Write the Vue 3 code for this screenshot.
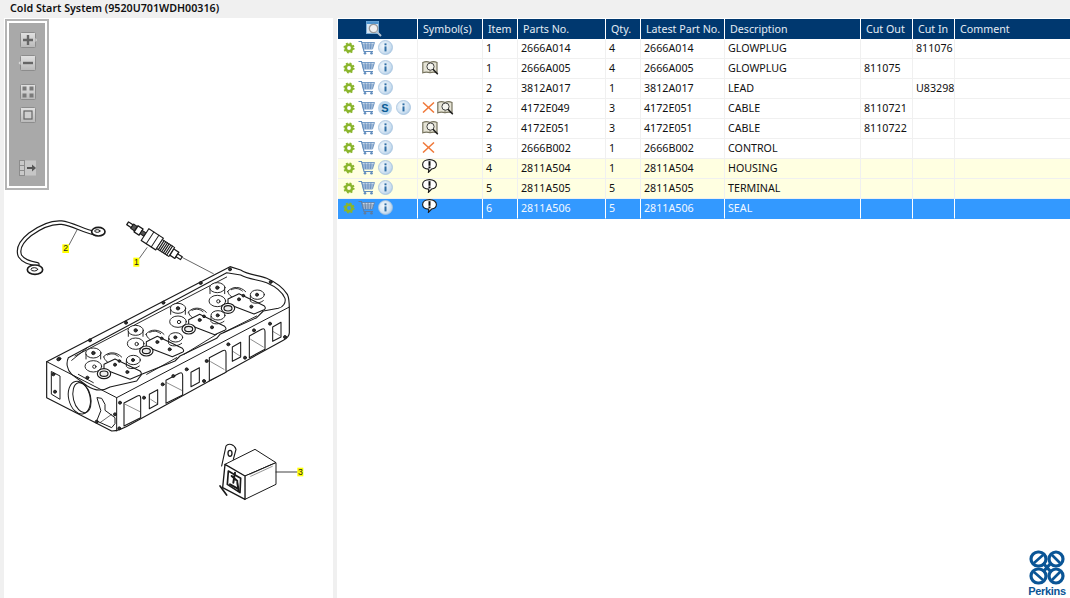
<template>
  <div class="page">
    <svg class="defs" width="0" height="0" aria-hidden="true">
      <defs>
        <radialGradient id="infoFill" cx="0.4" cy="0.4" r="0.7">
          <stop offset="0" stop-color="#f4f9fd" />
          <stop offset="0.65" stop-color="#cfe1f1" />
          <stop offset="1" stop-color="#a2c3e2" />
        </radialGradient>
        <linearGradient id="btnFill" x1="0" y1="0" x2="0" y2="1">
          <stop offset="0" stop-color="#e2e2e2" />
          <stop offset="1" stop-color="#b9b9b9" />
        </linearGradient>
        <symbol id="gear" viewBox="0 0 12 12">
          <circle cx="6" cy="6" r="3.2" fill="none" stroke="#8ab52c" stroke-width="2.6" />
          <circle cx="6" cy="6" r="4.7" fill="none" stroke="#8ab52c" stroke-width="1.8" stroke-dasharray="1.85 1.85" />
        </symbol>
        <symbol id="cart" viewBox="0 0 17 15">
          <path d="M0.5 1.5H3.5L6 11.5H15" fill="none" stroke="currentColor" stroke-width="1.1" />
          <path d="M4 2.5H16.5L14.5 9H5.5Z" fill="#c6d6e8" stroke="currentColor" stroke-width="0.8" />
          <path d="M7 2.5L7.6 9M10 2.5V9M13 2.5L12.4 9M4.6 5H16M5.2 7H15" stroke="currentColor" stroke-width="0.8" fill="none" />
          <circle cx="7" cy="13.3" r="1.3" fill="currentColor" />
          <circle cx="13.5" cy="13.3" r="1.3" fill="currentColor" />
        </symbol>
        <symbol id="info" viewBox="0 0 15 15">
          <circle cx="7.5" cy="7.5" r="7" fill="url(#infoFill)" stroke="#a5c2dd" stroke-width="0.8" />
          <rect x="6.5" y="6.4" width="2" height="5" fill="#2f6ea5" />
          <rect x="6.5" y="3.4" width="2" height="1.9" fill="#2f6ea5" />
        </symbol>
        <symbol id="cross" viewBox="0 0 13 11">
          <path d="M1 0.5L12 10.5M12 0.5L1 10.5" stroke="#f0793a" stroke-width="1.5" fill="none" />
        </symbol>
        <symbol id="book" viewBox="0 0 17 14">
          <path d="M0.8 1.5Q4.5 -0.2 8 1.5Q11.5 -0.2 15 1.5V11.8Q11.5 10.4 8 11.8Q4.5 10.4 0.8 11.8Z" fill="#e6e4d6" stroke="#77745f" stroke-width="1.2" />
          <path d="M8 1.5V11.8" stroke="#77745f" stroke-width="0.9" />
          <circle cx="8.5" cy="5.6" r="3.6" fill="#f6f6f0" stroke="#444" stroke-width="1" />
          <path d="M11 8.2L15.8 13.2" stroke="#1c1c1c" stroke-width="1.5" />
        </symbol>
        <symbol id="bubble" viewBox="0 0 15 14">
          <path d="M7.5 0.6C11.5 0.6 14.4 2.7 14.4 5.5C14.4 8 12.4 9.6 9.6 10L6.4 13.4L6.8 10.1C3.2 9.9 0.6 8.1 0.6 5.5C0.6 2.7 3.5 0.6 7.5 0.6Z" fill="#fff" stroke="#1a1a1a" stroke-width="1.1" />
          <rect x="6.5" y="2.2" width="2" height="4.6" fill="#111" />
          <rect x="6.5" y="7.4" width="2" height="1.8" fill="#111" />
        </symbol>
      </defs>
    </svg>

    <div class="title">Cold Start System (9520U701WDH00316)</div>

    <div class="main">
      <div class="drawing-pane">
        <div class="toolbar">
          <div class="toolbar-inner">
            <svg class="tool tool-plus" width="17" height="16" viewBox="0 0 17 16">
              <rect x="0.5" y="0.5" width="15" height="15" rx="1" fill="url(#btnFill)" stroke="#8c8c8c" />
              <path d="M15.5 6L17 8L15.5 10Z" fill="#ddd" />
              <path d="M3 8H13M8 3V13" stroke="#666" stroke-width="2.4" />
            </svg>
            <svg class="tool tool-minus" width="18" height="16" viewBox="0 0 18 16">
              <rect x="2.5" y="0.5" width="15" height="15" rx="1" fill="url(#btnFill)" stroke="#8c8c8c" />
              <path d="M2.5 6L0.5 8L2.5 10Z" fill="#ddd" />
              <path d="M5 8H15" stroke="#666" stroke-width="2.4" />
            </svg>
            <svg class="tool tool-grid" width="16" height="16" viewBox="0 0 16 16">
              <rect x="0.5" y="0.5" width="15" height="15" rx="1" fill="url(#btnFill)" stroke="#8c8c8c" />
              <rect x="2.5" y="2.5" width="4" height="4" fill="#7a7a7a" />
              <rect x="9.5" y="2.5" width="4" height="4" fill="#7a7a7a" />
              <rect x="2.5" y="9.5" width="4" height="4" fill="#7a7a7a" />
              <rect x="9.5" y="9.5" width="4" height="4" fill="#7a7a7a" />
            </svg>
            <svg class="tool tool-fit" width="16" height="16" viewBox="0 0 16 16">
              <rect x="0.5" y="0.5" width="15" height="15" rx="1" fill="url(#btnFill)" stroke="#8c8c8c" />
              <rect x="4" y="4" width="8" height="8" fill="#cfcfcf" stroke="#666" stroke-width="1.2" />
            </svg>
            <svg class="tool tool-panel" width="18" height="16" viewBox="0 0 18 16">
              <rect x="0.5" y="0.5" width="5" height="5" fill="#c9c9c9" stroke="#8c8c8c" />
              <rect x="0.5" y="5.5" width="5" height="5" fill="#c9c9c9" stroke="#8c8c8c" />
              <rect x="0.5" y="10.5" width="5" height="5" fill="#c9c9c9" stroke="#8c8c8c" />
              <rect x="6" y="0.5" width="11" height="15" fill="#d6d6d6" opacity="0.65" />
              <path d="M8 8H15" stroke="#555" stroke-width="2" />
              <path d="M13 4.5L17 8L13 11.5Z" fill="#555" />
            </svg>
          </div>
        </div>

        <svg class="exploded" viewBox="0 0 960 930" width="320" height="310">
          <g fill="none" stroke="#1a1a1a" stroke-width="2.8" stroke-linejoin="round" stroke-linecap="round">
            <!-- harness -->
            <path d="M112 190C85 185 70 180 60 165C50 140 65 120 90 100C120 78 150 62 185 65C215 68 250 90 285 97" stroke-width="14" />
            <path d="M112 190C85 185 70 180 60 165C50 140 65 120 90 100C120 78 150 62 185 65C215 68 250 90 285 97" stroke="#fff" stroke-width="7" />
            <ellipse cx="105" cy="206" rx="23" ry="14" stroke-width="5" fill="#fff" />
            <ellipse cx="103" cy="205" rx="10" ry="5" stroke-width="3" />
            <ellipse cx="295" cy="92" rx="20" ry="13" stroke-width="5" fill="#fff" />
            <ellipse cx="292" cy="90" rx="8" ry="4" stroke-width="3" />

            <!-- glow plug -->
            <g transform="translate(383 67) rotate(33)" fill="#fff">
              <rect x="0" y="-5" width="16" height="10" stroke-width="4" />
              <rect x="16" y="-8" width="14" height="16" fill="#555" />
              <rect x="30" y="-11" width="18" height="22" stroke-width="4" />
              <rect x="48" y="-6" width="14" height="12" fill="#555" />
              <rect x="62" y="-21" width="52" height="42" stroke-width="3.5" />
              <path d="M80 -21V21M98 -21V21" />
              <rect x="114" y="-16" width="44" height="32" />
              <path d="M120 -16V16M126 -16V16M132 -16V16M138 -16V16M144 -16V16M150 -16V16" stroke-width="3.5" />
              <rect x="158" y="-11" width="18" height="22" stroke-width="4" />
              <rect x="176" y="-5" width="16" height="10" stroke-width="3.5" />
            </g>
            <path d="M548 170L640 218" stroke-width="2" />
            <path d="M441 140L418 172" stroke-width="2" />
            <path d="M232 85L207 132" stroke-width="2" />

            <!-- cylinder head -->
            <path d="M140 482L690 197L722 207C745 222 775 222 800 232C830 245 850 262 862 280C868 292 868 305 868 325V395C868 405 860 412 850 418L395 668C375 680 355 690 335 690L140 590Z" fill="#fff" stroke-width="3.5" />
            <path d="M140 482L350 590V690M350 590L868 318" stroke-width="3" />
            <path d="M205 470L680 215L722 222C745 235 770 235 800 245C830 258 848 275 855 292C858 305 850 318 835 322L790 330L770 350L660 400L650 412L540 465L525 480L425 520L410 540L330 558C310 570 285 570 262 555L215 520C200 505 198 485 205 470Z" stroke-width="3.2" />
            <path d="M225 465L680 228M235 520L280 545M440 520L530 470M552 460L650 400M670 395L770 345M215 478L262 440" />

            <g v-for="(g, i) in cylinderGroups" :key="i" :transform="`translate(${g[0]} ${g[1]})`">
              <ellipse cx="280" cy="456" rx="23" ry="15" fill="#fff" />
              <path d="M258 460V474M302 460V474" />
              <ellipse cx="280" cy="496" rx="25" ry="17" fill="#fff" />
              <path d="M310 468C325 450 350 452 365 468M335 490C320 484 312 475 312 468M322 462C335 456 345 458 355 466" />
              <path d="M312 490L345 474L420 510Q428 518 420 522L390 535L312 505Z" fill="#fff" stroke-width="3.2" />
              <ellipse cx="400" cy="477" rx="21" ry="14" fill="#fff" />
              <path d="M379 480V496C385 505 405 505 418 495" />
              <ellipse cx="312" cy="518" rx="20" ry="15" fill="#fff" stroke-width="3.5" />
              <ellipse cx="312" cy="518" rx="12" ry="8" fill="#eee" stroke-width="3.5" />
              <circle cx="280" cy="456" r="5" fill="#333" />
              <circle cx="283" cy="497" r="5" fill="#fff" />
              <circle cx="345" cy="491" r="4.5" fill="#333" />
              <circle cx="358" cy="480" r="4" fill="#333" />
              <circle cx="382" cy="513" r="4.5" fill="#333" />
              <circle cx="399" cy="477" r="4.5" fill="#333" />
            </g>

            <path v-for="(w, i) in windows" :key="`w${i}`" :d="w" fill="#fff" stroke-width="3.2" />
            <path d="M376 610L420 632M500 545L545 568M632 482L672 505M752 415L790 438M452 595L472 608M700 452L720 465M820 392L840 404" stroke-width="1.5" />
            <circle v-for="(d, i) in dots" :key="`d${i}`" :cx="d[0]" :cy="d[1]" r="4.5" fill="#333" />

            <!-- end face -->
            <path d="M155 512L180 525V595L155 580Z" stroke-width="3" />
            <ellipse cx="238" cy="590" rx="32" ry="50" transform="rotate(-14 238 590)" stroke-width="3" />
            <ellipse cx="246" cy="590" rx="26" ry="46" transform="rotate(-14 246 590)" stroke-width="3" />
            <path d="M292 590L305 592L315 610V628L345 650V668L335 680L290 660L302 630Z" stroke-width="3" />
            <path d="M300 665L335 640" stroke-width="2" />

            <!-- relay -->
            <path d="M665 795L678 735C685 725 703 730 708 745L700 775" fill="#fff" stroke-width="3.5" />
            <ellipse cx="690" cy="757" rx="6" ry="9" stroke-width="4" fill="#fff" />
            <path d="M675 790L765 745L828 785L735 825Z" fill="#fff" stroke-width="3" />
            <path d="M735 825L828 785V850L735 895Z" fill="#fff" stroke-width="3" />
            <path d="M675 790L735 825V895L668 860Z" fill="#fff" stroke-width="4" />
            <path d="M750 820L815 790M752 826L817 796" stroke-width="1.4" />
            <path d="M685 810L722 832L720 875L682 850Z" stroke-width="5" />
            <path d="M695 825L712 840M690 850L712 862M705 815L700 845M712 845L716 870" stroke-width="6" />
            <path d="M660 855L680 882" stroke-width="5" />
            <path d="M828 813H892" stroke-width="2.5" />
          </g>
          <g class="callouts">
            <rect x="400" y="170" width="18" height="27" fill="#ffff00" />
            <text x="409" y="191">1</text>
            <rect x="187" y="130" width="20" height="26" fill="#ffff00" />
            <text x="197" y="151">2</text>
            <rect x="892" y="800" width="18" height="26" fill="#ffff00" />
            <text x="901" y="821">3</text>
          </g>
        </svg>
      </div>

      <div class="parts-pane">
        <table class="parts">
          <colgroup>
            <col v-for="c in columns" :key="c.label" :style="{ width: c.width + 'px' }" />
          </colgroup>
          <thead>
            <tr>
              <th class="th-find">
                <svg width="16" height="16" viewBox="0 0 16 16">
                  <rect x="0.5" y="0.5" width="12" height="12" fill="#d9e6f2" stroke="#7fb0d8" />
                  <rect x="0.5" y="0.5" width="12" height="2.5" fill="#4d94cf" />
                  <circle cx="7.5" cy="7.5" r="4.2" fill="#f0f0f0" stroke="#9a9a9a" stroke-width="1.3" />
                  <path d="M10.5 10.5L15 15" stroke="#b5c4d2" stroke-width="2" />
                </svg>
              </th>
              <th v-for="c in columns.slice(1)" :key="c.label">{{ c.label }}</th>
            </tr>
          </thead>
          <tbody>
            <tr v-for="(p, i) in parts" :key="i" :class="{ note: p.note, selected: p.selected }">
              <td>
                <div class="icons">
                  <svg class="i-gear" width="12" height="12"><use href="#gear" /></svg>
                  <svg class="i-cart" width="17" height="15"><use href="#cart" /></svg>
                  <span v-if="p.sic" class="sic">S</span>
                  <svg width="15" height="15"><use href="#info" /></svg>
                </div>
              </td>
              <td>
                <div class="symbols">
                  <svg v-if="p.cross" width="13" height="11"><use href="#cross" /></svg>
                  <svg v-if="p.book" width="17" height="14"><use href="#book" /></svg>
                  <svg v-if="p.bubble" class="i-bubble" width="15" height="14"><use href="#bubble" /></svg>
                </div>
              </td>
              <td>{{ p.item }}</td>
              <td>{{ p.no }}</td>
              <td>{{ p.qty }}</td>
              <td>{{ p.latest }}</td>
              <td>{{ p.desc }}</td>
              <td>{{ p.out }}</td>
              <td>{{ p.in }}</td>
              <td></td>
            </tr>
          </tbody>
        </table>

        <div class="brand">
          <svg width="36" height="35" viewBox="0 0 36 35">
            <g fill="none" stroke="#0a5596" stroke-width="3.2">
              <rect x="2" y="2" width="15" height="14" rx="7" />
              <rect x="20" y="2" width="14" height="14" rx="7" />
              <rect x="2" y="19" width="15" height="14" rx="7" />
              <rect x="20" y="19" width="14" height="14" rx="7" />
              <path d="M5 13L14 5M23 5L31 13M5 22L14 30M31 22L23 30" stroke-width="2.6" />
              <path d="M14 13L22 22M22 13L14 22" />
            </g>
          </svg>
          <span>Perkins</span>
        </div>
      </div>
    </div>
  </div>
</template>

<script setup>
const columns = [
  { label: 'Actions', width: 80 },
  { label: 'Symbol(s)', width: 65 },
  { label: 'Item', width: 35 },
  { label: 'Parts No.', width: 88 },
  { label: 'Qty.', width: 35 },
  { label: 'Latest Part No.', width: 84 },
  { label: 'Description', width: 136 },
  { label: 'Cut Out', width: 52 },
  { label: 'Cut In', width: 42 },
  { label: 'Comment', width: 115 }
]

const parts = [
  { item: 1, no: '2666A014', qty: 4, latest: '2666A014', desc: 'GLOWPLUG', in: '811076' },
  { item: 1, no: '2666A005', qty: 4, latest: '2666A005', desc: 'GLOWPLUG', out: '811075', book: true },
  { item: 2, no: '3812A017', qty: 1, latest: '3812A017', desc: 'LEAD', in: 'U83298' },
  { item: 2, no: '4172E049', qty: 3, latest: '4172E051', desc: 'CABLE', out: '8110721', sic: true, cross: true, book: true },
  { item: 2, no: '4172E051', qty: 3, latest: '4172E051', desc: 'CABLE', out: '8110722', book: true },
  { item: 3, no: '2666B002', qty: 1, latest: '2666B002', desc: 'CONTROL', cross: true },
  { item: 4, no: '2811A504', qty: 1, latest: '2811A504', desc: 'HOUSING', bubble: true, note: true },
  { item: 5, no: '2811A505', qty: 5, latest: '2811A505', desc: 'TERMINAL', bubble: true, note: true },
  { item: 6, no: '2811A506', qty: 5, latest: '2811A506', desc: 'SEAL', bubble: true, selected: true }
]

const cylinderGroups = [[0, 0], [127, -68], [254, -134], [372, -196]]

const windows = [
  'M372 606L412 585Q422 580 422 592V650L372 675Z',
  'M498 538L538 517Q548 512 548 524V582L498 607Z',
  'M628 470L668 449Q678 444 678 456V514L628 539Z',
  'M748 405L785 385Q795 380 795 392V445L748 470Z',
  'M448 580L473 566V610L448 623Z',
  'M573 514L598 500V544L573 557Z',
  'M697 438L722 424V468L697 481Z',
  'M818 378L843 364V408L818 421Z'
]

const dots = [
  [178, 473], [270, 418], [378, 365], [490, 305], [602, 246], [690, 205], [812, 243],
  [360, 605], [358, 682], [290, 662], [345, 640], [160, 520], [165, 572],
  [432, 590], [488, 550], [520, 525], [560, 505], [612, 540], [620, 480], [685, 430],
  [735, 470], [762, 388], [855, 408], [810, 368], [262, 530], [175, 475]
]
</script>

<style scoped>
.page {
  width: 1070px;
  height: 598px;
  display: flex;
  flex-direction: column;
  background: #f0f0f0;
  font-family: "Noto Sans", "Liberation Sans", sans-serif;
  font-size: 10.7px;
  color: #111;
  overflow: hidden;
}

.defs {
  position: absolute;
}

.title {
  height: 18px;
  line-height: 16px;
  padding-left: 10px;
  font-weight: 600;
  font-size: 10.7px;
}

.main {
  flex: 1;
  display: flex;
  min-height: 0;
}

.drawing-pane {
  width: 329px;
  margin-left: 4px;
  background: #fff;
  display: flex;
  flex-direction: column;
}

.toolbar {
  width: 44px;
  height: 171px;
  margin: 1px 0 0 1px;
  padding: 2px;
  border: 2px solid #b4b4b4;
  box-sizing: border-box;
  background: #fff;
}

.toolbar-inner {
  height: 100%;
  background: #a9a9a9;
  display: flex;
  flex-direction: column;
  align-items: flex-start;
}

.tool {
  margin-left: 11px;
  display: block;
}

.tool-plus { margin-top: 9px; }
.tool-minus { margin-top: 7px; margin-left: 9px; }
.tool-grid { margin-top: 13px; }
.tool-fit { margin-top: 7px; }
.tool-panel { margin-top: auto; margin-bottom: 10px; margin-left: 10px; }

.exploded {
  display: block;
  margin-top: 11px;
  margin-left: -4px;
}

.callouts text {
  font-family: "Liberation Sans", sans-serif;
  font-size: 26px;
  text-anchor: middle;
  fill: #222;
}

.parts-pane {
  flex: 1;
  margin-left: 4px;
  background: #fff;
  display: flex;
  flex-direction: column;
  min-width: 0;
}

.parts {
  width: 732px;
  margin: 1px 0 0 1px;
  table-layout: fixed;
  border-collapse: separate;
  border-spacing: 0;
}

.parts th {
  height: 20px;
  padding: 1px 0 1px 5px;
  background: #00386f;
  color: #e4ecf4;
  font-weight: 400;
  font-size: 10.7px;
  text-align: left;
  white-space: nowrap;
  border-right: 1px solid #fff;
  box-sizing: border-box;
}

.parts th:last-child,
.parts td:last-child {
  border-right: 0;
}

.parts .th-find {
  padding: 0 8px 0 0;
  text-align: center;
}

.th-find svg {
  display: block;
  margin: 0 auto;
}

.parts td {
  height: 20px;
  padding: 0 0 2px 3px;
  border-right: 1px solid #f0f0f0;
  border-bottom: 1px solid #f0f0f0;
  box-sizing: border-box;
  white-space: nowrap;
  overflow: hidden;
}

.parts tr.note td {
  background: #ffffe1;
}

.parts tr.selected td {
  background: #3399ff;
  color: #f2f8ff;
  border-right-color: #fff;
  border-bottom-color: #3399ff;
}

.icons {
  display: flex;
  align-items: center;
  color: #5f8cbd;
  padding-left: 2px;
}

.selected .icons {
  color: #5f7c9f;
}

.i-gear {
  margin-right: 3px;
}

.i-cart {
  margin-right: 3px;
}

.sic {
  width: 14px;
  height: 14px;
  margin-right: 4px;
  border-radius: 50%;
  background: #bcd6ec;
  color: #0b5c94;
  font-family: "Liberation Sans", sans-serif;
  font-weight: 700;
  font-size: 11px;
  line-height: 14px;
  text-align: center;
}

.symbols {
  display: flex;
  align-items: center;
  gap: 2px;
}

.i-bubble {
  margin-top: -4px;
}

.symbols svg:first-child {
  margin-left: 1px;
}

.brand {
  margin-top: auto;
  margin-left: auto;
  margin-right: 3px;
  width: 40px;
  display: flex;
  flex-direction: column;
  align-items: center;
  color: #0a5596;
  font-family: "Liberation Sans", sans-serif;
  font-weight: 700;
  font-size: 11px;
  line-height: 13px;
  letter-spacing: -0.3px;
}
</style>

<style>
html, body {
  margin: 0;
  background: #f0f0f0;
}
</style>
